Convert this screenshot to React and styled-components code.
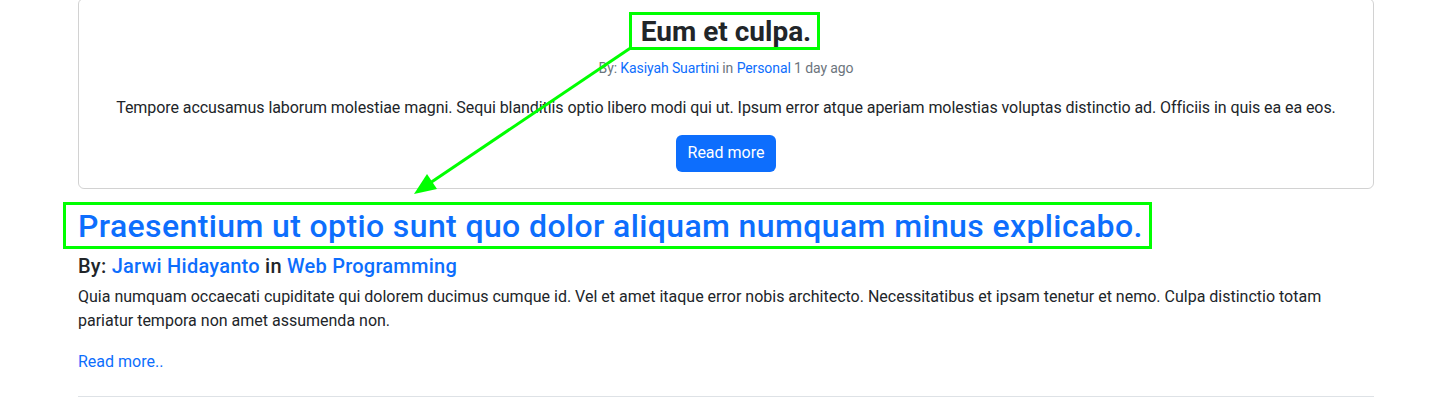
import React from 'react'
import styled, { createGlobalStyle } from 'styled-components'

const Global = createGlobalStyle`
  body {
    margin: 0;
    background: #fff;
    color: #212529;
    font-family: Roboto, "Liberation Sans", sans-serif;
    font-size: 16px;
    line-height: 1.5;
  }
  * { box-sizing: border-box; }
`

const Page = styled.div`
  position: relative;
  height: 405px;
  overflow: hidden;
`

const Container = styled.main`
  width: 1296px;
  margin: -2px 62px 0 78px;
`

const Card = styled.article`
  border: 1px solid rgba(0, 0, 0, 0.175);
  border-radius: 6px;
  padding: 16px;
  text-align: center;
  margin-bottom: 18px;
`

const CardTitle = styled.h3`
  margin: 0 0 9px;
  font-size: 28px;
  font-weight: 700;
  line-height: 1.2;
`

const Meta = styled.p`
  margin: 0 0 17px;
  font-size: 14px;
  color: #6c757d;
  letter-spacing: -0.1px;
`

const Link = styled.a`
  color: #0d6efd;
  text-decoration: none;
  cursor: pointer;
`

const Text = styled.p`
  margin: 0 0 ${p => p.$mb || 16}px;
  letter-spacing: ${p => p.$tight ? '-0.07px' : 'normal'};
`

const Button = styled.a`
  display: inline-block;
  padding: 6.5px 12px;
  font-size: 16px;
  line-height: 1.5;
  color: #fff;
  background: #0d6efd;
  border-radius: 6px;
  text-decoration: none;
  cursor: pointer;
`

const PostTitle = styled.h2`
  margin: 0 0 9px;
  font-size: 32px;
  font-weight: 500;
  line-height: 1.2;
  letter-spacing: 0.38px;

  a { color: #0d6efd; text-decoration: none; }
`

const Byline = styled.h5`
  margin: 0 0 7px;
  font-size: 20px;
  font-weight: 500;
  line-height: 1.2;
  letter-spacing: 0.24px;
`

const ReadMore = styled.div`
  margin-bottom: 22px;
`

const Rule = styled.hr`
  margin: 0;
  border: 0;
  border-top: 1px solid #dee2e6;
`

const Overlay = styled.svg`
  position: absolute;
  left: 0;
  top: 0;
  pointer-events: none;
`

const posts = [
  {
    title: 'Praesentium ut optio sunt quo dolor aliquam numquam minus explicabo.',
    author: 'Jarwi Hidayanto',
    category: 'Web Programming',
    body: 'Quia numquam occaecati cupiditate qui dolorem ducimus cumque id. Vel et amet itaque error nobis architecto. Necessitatibus et ipsam tenetur et nemo. Culpa distinctio totam pariatur tempora non amet assumenda non.',
  },
]

export default function App() {
  return (
    <Page>
      <Global />
      <Container>
        <Card>
          <CardTitle>Eum et culpa.</CardTitle>
          <Meta>
            By: <Link>Kasiyah Suartini</Link> in <Link>Personal</Link> 1 day ago
          </Meta>
          <Text $mb={15} $tight>
            Tempore accusamus laborum molestiae magni. Sequi blanditiis optio libero modi qui ut. Ipsum error atque aperiam molestias voluptas distinctio ad. Officiis in quis ea ea eos.
          </Text>
          <Button>Read more</Button>
        </Card>

        {posts.map(post => (
          <section key={post.title}>
            <PostTitle><a>{post.title}</a></PostTitle>
            <Byline>
              By: <Link>{post.author}</Link> in <Link>{post.category}</Link>
            </Byline>
            <Text $mb={17}>{post.body}</Text>
            <ReadMore><Link>Read more..</Link></ReadMore>
            <Rule />
          </section>
        ))}
      </Container>

      {/* annotation boxes and arrow */}
      <Overlay width="1436" height="405" viewBox="0 0 1436 405">
        <g fill="none" stroke="#00ff00" strokeWidth="3">
          <rect x="630.5" y="13.5" width="188" height="35" />
          <rect x="64.5" y="203.5" width="1086" height="44" />
          <line x1="632" y1="47" x2="430" y2="183" />
        </g>
        <polygon points="414,194 437,189 427,174" fill="#00ff00" />
      </Overlay>
    </Page>
  )
}
